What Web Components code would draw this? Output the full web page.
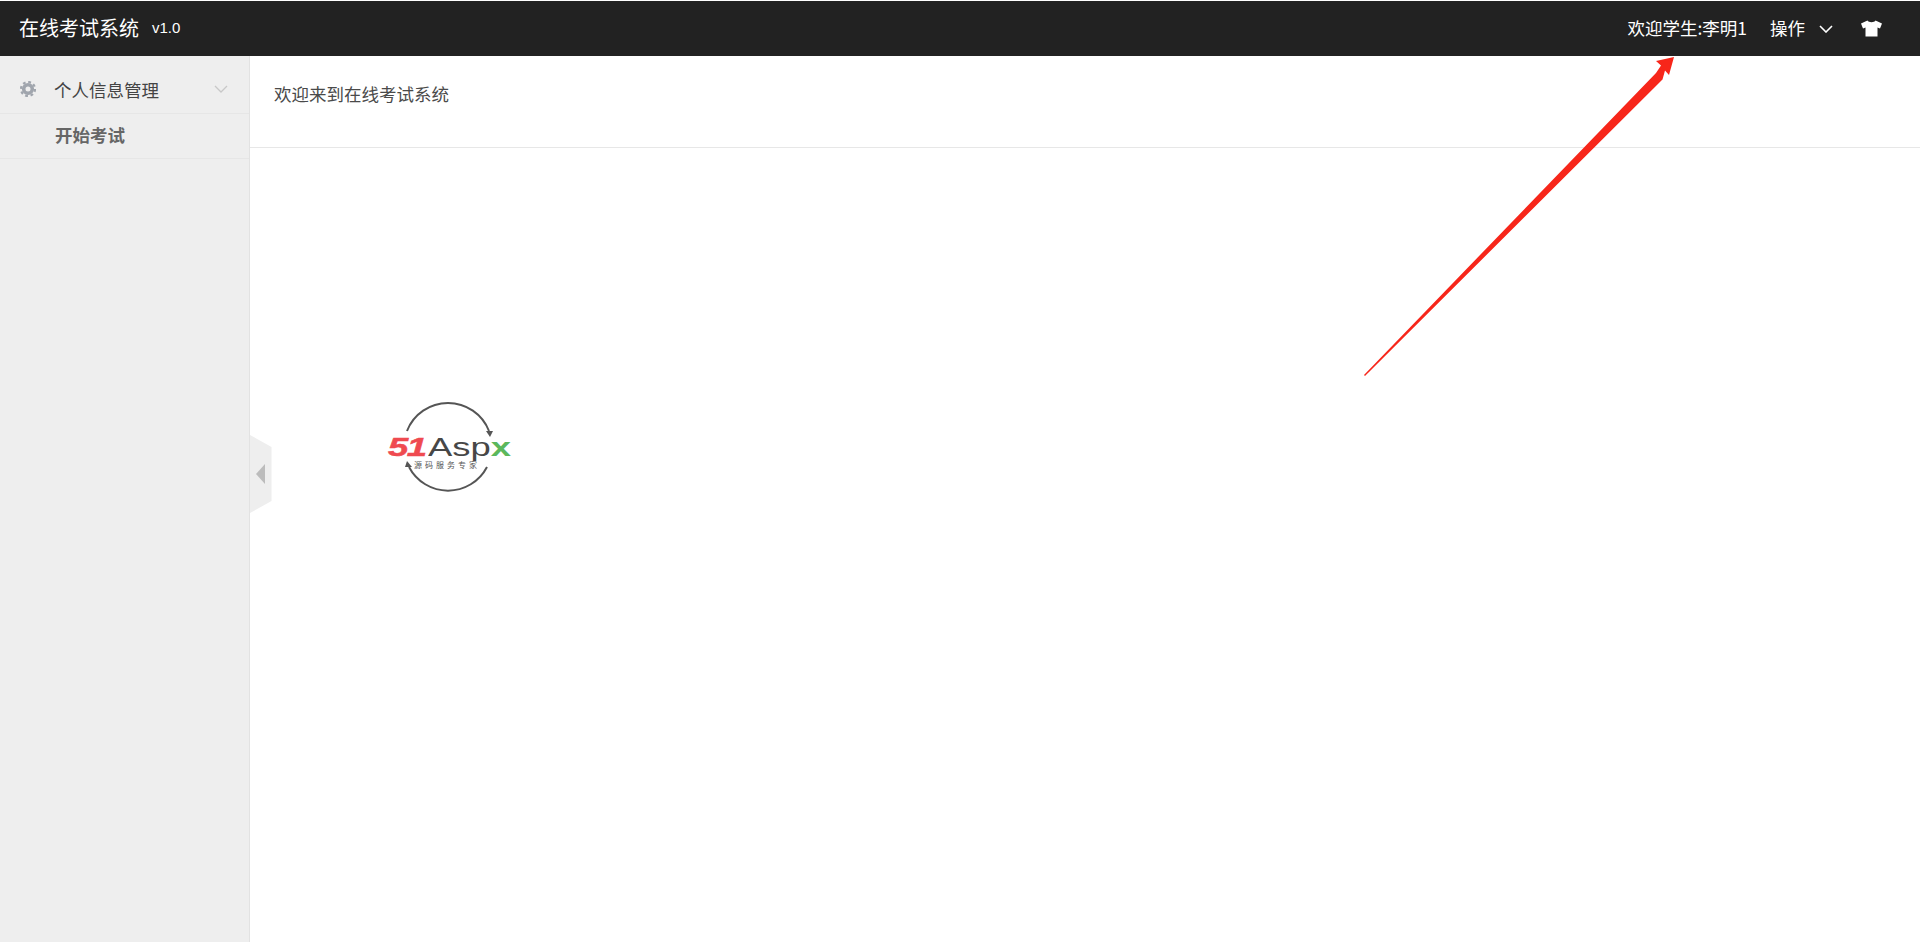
<!DOCTYPE html>
<html lang="zh"><head><meta charset="utf-8"><title>在线考试系统</title>
<style>
html,body{margin:0;height:100%;background:#fff;overflow:hidden}
body{font-family:"Noto Sans CJK SC","Liberation Sans",sans-serif;font-size:17.5px;color:#444}
exam-app{height:942px}
</style></head><body>
<exam-app>
  <exam-navbar slot="top" title-text="在线考试系统" version="v1.0" welcome="欢迎学生:李明1" action="操作"></exam-navbar>
  <exam-sidebar slot="side">
    <exam-menu-head>个人信息管理</exam-menu-head>
    <exam-menu-item>开始考试</exam-menu-item>
  </exam-sidebar>
  <exam-main slot="main"><exam-logo></exam-logo></exam-main>
</exam-app>
<script>
function def(name, html){
  customElements.define(name, class extends HTMLElement{
    connectedCallback(){
      if(this.shadowRoot) return;
      const r=this.attachShadow({mode:'open'});
      r.innerHTML=typeof html==='function'?html(this):html;
    }
  });
}
def('exam-app',`<style>
:host{display:grid;grid-template-rows:auto 1fr;grid-template-columns:250px 1fr;position:relative;overflow:hidden}
.top{grid-column:1/3}
.over{position:absolute;left:0;top:0;pointer-events:none}
.handle{position:absolute;left:250px;top:435px}
</style>
<div class="top"><slot name="top"></slot></div>
<slot name="side"></slot>
<slot name="main"></slot>
<svg class="handle" width="22" height="78" viewBox="0 0 22 78"><path d="M0 0L21.500 12V66L0 78Z" fill="#eeeeee"/><path d="M15 29V49L6 39Z" fill="#bcbcbc"/></svg>
<svg class="over" width="1920" height="942" viewBox="0 0 1920 942"><path d="M1364 375L1365 376L1662.500 79.500L1665 70.500L1669 75L1674 57L1656 61L1661 65.500L1656 73Z" fill="#f7261a"/></svg>`);
def('exam-navbar',h=>`<style>
:host{display:flex;align-items:center;justify-content:space-between;box-sizing:border-box;height:56px;margin-top:1px;margin-bottom:-1px;background:#222;color:#fff;padding:0 38px 3px 19px;font-size:17.500px}
.l,.r{display:flex;align-items:center}
.t{font-size:20px;line-height:28px}
.v{font-size:15px;margin-left:13px;font-family:"Liberation Sans",sans-serif}
.op{margin-left:23px}
.c{margin-left:14px;position:relative;top:1px}
.s{margin-left:28px;position:relative;top:1px}
svg{display:block}
</style>
<div class="l"><span class="t">${h.getAttribute('title-text')}</span><span class="v">${h.getAttribute('version')}</span></div>
<div class="r"><span>${h.getAttribute('welcome')}</span><span class="op">${h.getAttribute('action')}</span>
<svg class="c" width="14" height="8" viewBox="0 0 14 8"><path d="M1 1L7 7L13 1" fill="none" stroke="#fff" stroke-width="1.600"/></svg>
<svg class="s" width="21" height="17" viewBox="0 0 21 17"><path d="M6.500 0.500L0 3.500L2 8.500L4.500 7.500V16.500H16.500V7.500L19 8.500L21 3.500L14.500 0.500C13.500 2.800 7.500 2.800 6.500 0.500Z" fill="#fff"/></svg></div>`);
def('exam-sidebar',`<style>
:host{display:block;box-sizing:border-box;width:250px;background:#eee;border-right:1px solid #e2e2e2;height:886px}
</style><slot></slot>`);
def('exam-menu-head',`<style>
:host{display:flex;align-items:center;box-sizing:border-box;height:58px;padding:9px 21px 0 20px;border-bottom:1px solid #e6e6e6;color:#444;font-size:17.500px}
svg{display:block}
.g{margin-right:18px}
.x{flex:1}
</style>
<svg class="g" width="16" height="16" viewBox="0 0 16 16"><circle cx="8" cy="8" r="4.300" fill="none" stroke="#a0a5ad" stroke-width="3.600"/><circle cx="8" cy="8" r="7" fill="none" stroke="#a0a5ad" stroke-width="2.200" stroke-dasharray="2.800 2.700"/></svg>
<span class="x"><slot></slot></span>
<svg width="14" height="8" viewBox="0 0 14 8"><path d="M1 1L7 7L13 1" fill="none" stroke="#c8c8c8" stroke-width="1.300"/></svg>`);
def('exam-menu-item',`<style>
:host{display:flex;align-items:center;box-sizing:border-box;height:45px;padding:0 0 3px 55px;border-bottom:1px solid #e6e6e6;color:#666;font-size:17.500px;font-weight:700}
</style><slot></slot>`);
def('exam-main',`<style>
:host{display:block;position:relative;background:#fff}
header{box-sizing:border-box;height:92px;border-bottom:1px solid #e7e7e7;padding:0 24px 17px;display:flex;align-items:center;color:#4a4a4a;font-size:17.500px}
.b{padding:254px 0 0 137px}
</style><header>欢迎来到在线考试系统</header><div class="b"><slot></slot></div>`);
def('exam-logo',`<style>
:host{display:block;position:relative;width:126px;height:92px}
svg{position:absolute;left:0;top:0;overflow:visible}
.t{position:absolute;white-space:nowrap;line-height:1;transform-origin:0 0}
.a{left:1px;top:32px;font:italic 700 26px/1 "Liberation Sans",sans-serif;color:#ef4a50;letter-spacing:-1px;transform:scaleX(1.4);-webkit-text-stroke:.5px #ef4a50}
.b{left:41px;top:32px;font:400 26px/1 "Liberation Sans",sans-serif;color:#474747;transform:scaleX(1.4)}
.b i{font-style:normal;color:#5cb85c;font-weight:700}
.c{left:27px;top:59px;font:8px/1 "Noto Sans CJK SC",sans-serif;color:#555;letter-spacing:3px}
</style>
<svg width="126" height="92" viewBox="0 0 126 92"><g fill="none" stroke="#555" stroke-width="2"><path d="M20 29A44 44 0 0 1 102 29"/><path d="M22 65A44 44 0 0 0 100 65"/></g><path d="M99 29L106 29L103 35Z" fill="#555"/><path d="M18 65L25 65L20 59Z" fill="#555"/></svg>
<span class="t a">51</span><span class="t b">Asp<i>x</i></span><span class="t c">源码服务专家</span>`);
</script>
</body></html>
